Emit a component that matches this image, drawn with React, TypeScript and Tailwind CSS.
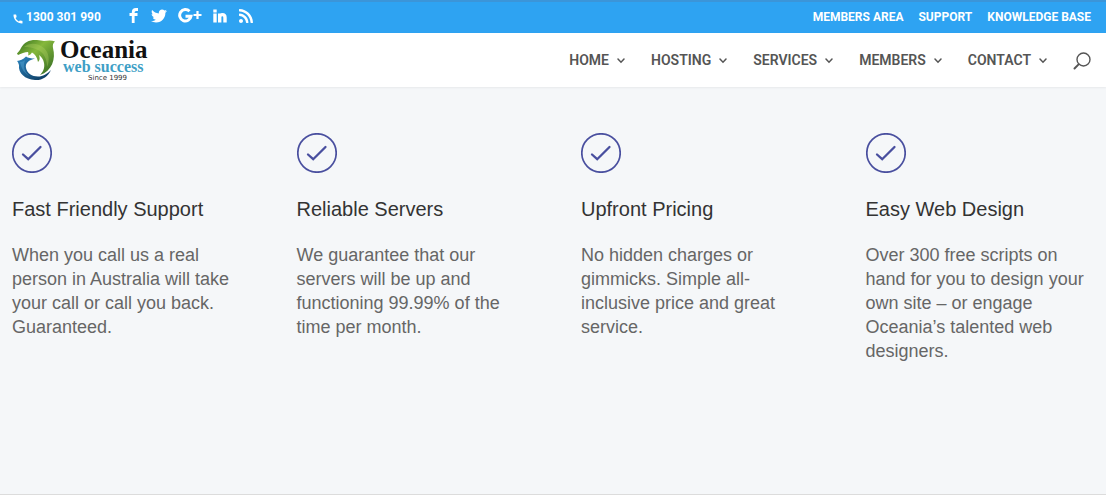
import { FaRss, FaTwitter } from 'react-icons/fa'
import { MdCall } from 'react-icons/md'

const TOP_LINKS = ['Members Area', 'Support', 'Knowledge Base']

const MENU = ['Home', 'Hosting', 'Services', 'Members', 'Contact']

const FEATURES = [
  {
    title: 'Fast Friendly Support',
    text: 'When you call us a real person in Australia will take your call or call you back. Guaranteed.',
  },
  {
    title: 'Reliable Servers',
    text: 'We guarantee that our servers will be up and functioning 99.99% of the time per month.',
  },
  {
    title: 'Upfront Pricing',
    text: 'No hidden charges or gimmicks. Simple all-inclusive price and great service.',
  },
  {
    title: 'Easy Web Design',
    text: 'Over 300 free scripts on hand for you to design your own site – or engage Oceania’s talented web designers.',
  },
]

function FacebookIcon() {
  return (
    <svg viewBox="0 0 9 15" className="h-[15px] w-[9px]" fill="none" stroke="currentColor" strokeWidth="2.800" aria-hidden="true">
      <path d="M9 1.500H7C5 1.500 4.200 2.500 4.200 4.500V15M0.500 6.500H8.500" />
    </svg>
  )
}

function GooglePlusIcon() {
  return (
    <svg viewBox="0 0 24 15" className="h-[15px] w-6" fill="none" stroke="currentColor" aria-hidden="true">
      <path d="M11.500 3.300A5.700 5.700 0 1 0 13 8.200H7.500" strokeWidth="3" />
      <path d="M19.500 3V11M15.500 7H23.500" strokeWidth="2.200" />
    </svg>
  )
}

function LinkedinIcon() {
  return (
    <svg viewBox="0 0 14 14" className="size-[14px]" fill="none" stroke="currentColor" strokeWidth="3.400" aria-hidden="true">
      <path d="M2 4.500V13.500M2 0.500V3.500M6.700 4.500V13.500M6.700 8C6.700 5 12 4.500 12 8.500V13.500" />
    </svg>
  )
}

function Dolphin() {
  return (
    <svg viewBox="0 0 40 42" className="h-[42px] w-10" aria-hidden="true">
      <defs>
        <linearGradient id="green" x1="0" y1="0" x2="1" y2="1">
          <stop offset="0" stopColor="#2f6b1c" />
          <stop offset="0.4" stopColor="#86b83c" />
          <stop offset="1" stopColor="#2c6420" />
        </linearGradient>
        <linearGradient id="blue" x1="0" y1="0" x2="1" y2="1">
          <stop offset="0" stopColor="#2d86c0" />
          <stop offset="1" stopColor="#0b3558" />
        </linearGradient>
      </defs>
      <path
        d="M1 14.500C3 12.500 4 11 5 9C8 3 14 .5 21 1C24 1.200 26 1.500 28 2C32 1.500 36 1.200 39 2.500C37 4 36.500 6 37 9C40 20 36 32 24 36C27 33 29 29 28 24C27.500 21 26 18 23 16C24 19 24 21 22 23C21 18 19 15 16 13.500C15 15 14 16 12 16.500C12.500 15 12.500 14 12 13C9 13 5 14.500 2 16Z"
        fill="url(#green)"
      />
      <path d="M8 8C14 3 22 4 28 9C33 14 34 21 31 28C31 20 28 14 22 11C17 8.500 12 8 8 8Z" fill="#b4d567" opacity="0.35" />
      <path
        d="M1 22C4 21.500 7 20.500 10 17.500C12 19 15 19.500 19 19.500C13 21 9 24 10 29C11 34 16 37.500 22 37.500C27 37.500 31 35 35 31C32 38 26 41.500 19 41C9 40.500 2 34 3 26C2.500 24.500 2 23 1 22Z"
        fill="url(#blue)"
      />
      <path d="M4 23C6 23 8 22 9 21C7 27 8 32 13 37C7 33 5 28 4 23Z" fill="#5eb0dc" opacity="0.4" />
    </svg>
  )
}

function Logo() {
  return (
    <a href="#home" className="flex items-center gap-1" aria-label="Oceania web success">
      <Dolphin />
      <span className="flex flex-col pt-[2px] font-['Liberation_Serif',serif] font-bold">
        <span className="text-[25px] leading-[20px] text-[#111]">Oceania</span>
        <span className="pl-[3px] text-[16px] leading-[14px] text-[#3f9fc6]">web success</span>
        <span className="pl-7 font-['DejaVu_Sans',sans-serif] text-[7px] leading-[8px] font-normal text-[#333]">Since 1999</span>
      </span>
    </a>
  )
}

function Chevron() {
  return (
    <svg viewBox="0 0 8 6" className="mt-[3px] h-[6px] w-2" fill="none" stroke="currentColor" strokeWidth="1.500" strokeLinecap="round" aria-hidden="true">
      <path d="M1 1L4 4.200L7 1" />
    </svg>
  )
}

function CheckCircle() {
  return (
    <svg viewBox="0 0 40 40" className="size-10" fill="none" stroke="#494f9f" aria-hidden="true">
      <circle cx="20" cy="20" r="19.200" strokeWidth="1.700" />
      <path d="M11 21.500L16.200 26.200L28.500 14" strokeWidth="2.300" strokeLinecap="round" />
    </svg>
  )
}

export default function App() {
  return (
    <div className="bg-white font-['Liberation_Sans',Arial,sans-serif]">
      {/* Top bar */}
      <div className="flex h-[33px] items-center justify-between border-t-2 border-[#3b95d9] bg-[#2ea3f2] pr-[15px] pb-[2px] pl-3 font-['Roboto',sans-serif] text-xs font-bold text-white">
        <div className="flex items-center">
          <a href="tel:1300301990" className="flex items-center gap-[2px]">
            <MdCall className="mt-1 size-3" aria-hidden="true" />
            1300 301 990
          </a>
          <div className="mb-[2px] ml-7 flex items-center">
            <a href="#facebook" aria-label="Facebook">
              <FacebookIcon />
            </a>
            <a href="#twitter" aria-label="Twitter" className="ml-[13px]">
              <FaTwitter className="size-4" />
            </a>
            <a href="#google" aria-label="Google Plus" className="ml-[11px]">
              <GooglePlusIcon />
            </a>
            <a href="#linkedin" aria-label="LinkedIn" className="ml-[11px]">
              <LinkedinIcon />
            </a>
            <a href="#rss" aria-label="RSS" className="ml-[11px]">
              <FaRss className="size-4" />
            </a>
          </div>
        </div>
        <nav className="flex gap-[15px] uppercase">
          {TOP_LINKS.map((label) => (
            <a key={label} href="#top">{label}</a>
          ))}
        </nav>
      </div>

      {/* Main menu */}
      <header className="relative flex h-[54px] items-center justify-between bg-white pr-[15px] pl-4 shadow-[0_1px_2px_rgba(0,0,0,0.06)]">
        <Logo />
        <nav className="flex items-center gap-[26px] font-['Roboto',sans-serif] text-sm font-semibold text-[#555] uppercase">
          {MENU.map((label) => (
            <a key={label} href="#menu" className="flex items-center gap-2 pb-px">
              {label}
              <Chevron />
            </a>
          ))}
          <button type="button" aria-label="Search" className="pt-[2px]">
            <svg viewBox="0 0 18 18" className="size-[18px]" fill="none" stroke="currentColor" strokeLinecap="round">
              <circle cx="10.500" cy="7.500" r="6.500" strokeWidth="1.400" />
              <path d="M5.600 12.400L1.500 16.500" strokeWidth="2" />
            </svg>
          </button>
        </nav>
      </header>

      {/* Features */}
      <section className="min-h-[408px] border-b border-[#dcdcdc] bg-[#f5f7f9] px-3 pt-[46px] pb-12">
        <div className="grid grid-cols-4 gap-14">
          {FEATURES.map((f) => (
            <article key={f.title}>
              <CheckCircle />
              <h2 className="mt-6 text-xl leading-6 text-[#333]">{f.title}</h2>
              <p className="mt-[22px] text-lg leading-6 text-[#666]">{f.text}</p>
            </article>
          ))}
        </div>
      </section>
    </div>
  )
}
